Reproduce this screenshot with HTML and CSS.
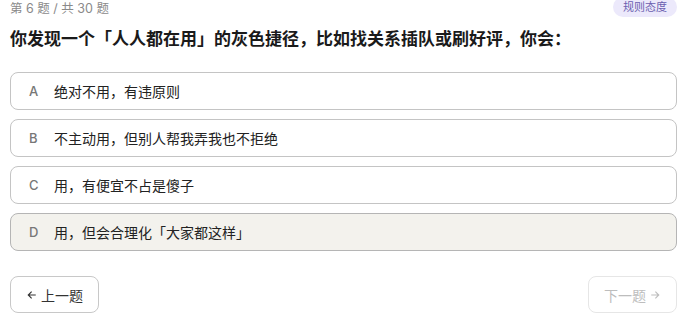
FILE: index.html
```html
<!DOCTYPE html>
<html lang="zh-CN">
<head>
    <meta charset="UTF-8">
    <title>测验</title>
    <link rel="stylesheet" href="styles.css">
</head>
<body>
    <div class="quiz">
        <div class="quiz-top">
            <span class="progress">第 6 题 / 共 30 题</span>
            <span class="tag">规则态度</span>
        </div>

        <h2 class="question">你发现一个「人人都在用」的灰色捷径，比如找关系插队或刷好评，你会：</h2>

        <div class="options">
            <button class="option"><span class="letter">A</span>绝对不用，有违原则</button>
            <button class="option"><span class="letter">B</span>不主动用，但别人帮我弄我也不拒绝</button>
            <button class="option"><span class="letter">C</span>用，有便宜不占是傻子</button>
            <button class="option selected"><span class="letter">D</span>用，但会合理化「大家都这样」</button>
        </div>

        <div class="nav">
            <button class="nav-btn">
                <svg class="arrow" viewBox="0 0 16 16"><path d="M13 8H3M7.5 3.5 3 8l4.5 4.5"></path></svg>
                上一题
            </button>
            <button class="nav-btn" disabled>
                下一题
                <svg class="arrow" viewBox="0 0 16 16"><path d="M3 8h10M8.5 3.5 13 8l-4.5 4.5"></path></svg>
            </button>
        </div>
    </div>
</body>
</html>
```

FILE: styles.css
```css
* {
    margin: 0;
    padding: 0;
    box-sizing: border-box;
}

body {
    font-family: Inter, "Noto Sans CJK SC", sans-serif;
    background: #fff;
    color: #1f1f1f;
}

.quiz {
    padding: 0 16px 0 10px;
    margin-top: -4px;
}

.quiz-top {
    display: flex;
    justify-content: space-between;
    align-items: center;
    height: 22px;
}

.progress {
    font-size: 12.5px;
    color: #8a8a8a;
}

.tag {
    font-size: 11px;
    color: #6b5fb0;
    background: #ece9fb;
    border-radius: 10px;
    padding: 3px 10px;
    line-height: 14px;
}

.question {
    font-size: 17px;
    font-weight: 700;
    color: #1a1a1a;
    line-height: 24px;
    margin-top: 9px;
}

.options {
    display: flex;
    flex-direction: column;
    gap: 9px;
    margin-top: 21px;
}

.option {
    display: flex;
    align-items: center;
    height: 38px;
    padding: 0 18px;
    border: 1px solid #c4c4c4;
    border-radius: 8px;
    background: #fff;
    font-family: inherit;
    font-size: 14px;
    color: #222;
    text-align: left;
    cursor: pointer;
}

.option.selected {
    background: #f3f2ed;
    border-color: #b5b5b5;
}

.letter {
    width: 25px;
    font-size: 13px;
    font-weight: 500;
    color: #777;
}

.nav {
    display: flex;
    justify-content: space-between;
    margin-top: 25px;
}

.nav-btn {
    display: flex;
    align-items: center;
    gap: 3px;
    height: 37px;
    width: 89px;
    justify-content: center;
    border: 1px solid #c8c8c8;
    border-radius: 8px;
    background: #fff;
    font-family: inherit;
    font-size: 14px;
    color: #333;
    cursor: pointer;
}

.nav-btn:disabled {
    color: #bdbdbd;
    border-color: #e6e6e6;
    cursor: default;
}

.arrow {
    width: 12px;
    height: 12px;
    fill: none;
    stroke: currentColor;
    stroke-width: 1.5;
}
```
